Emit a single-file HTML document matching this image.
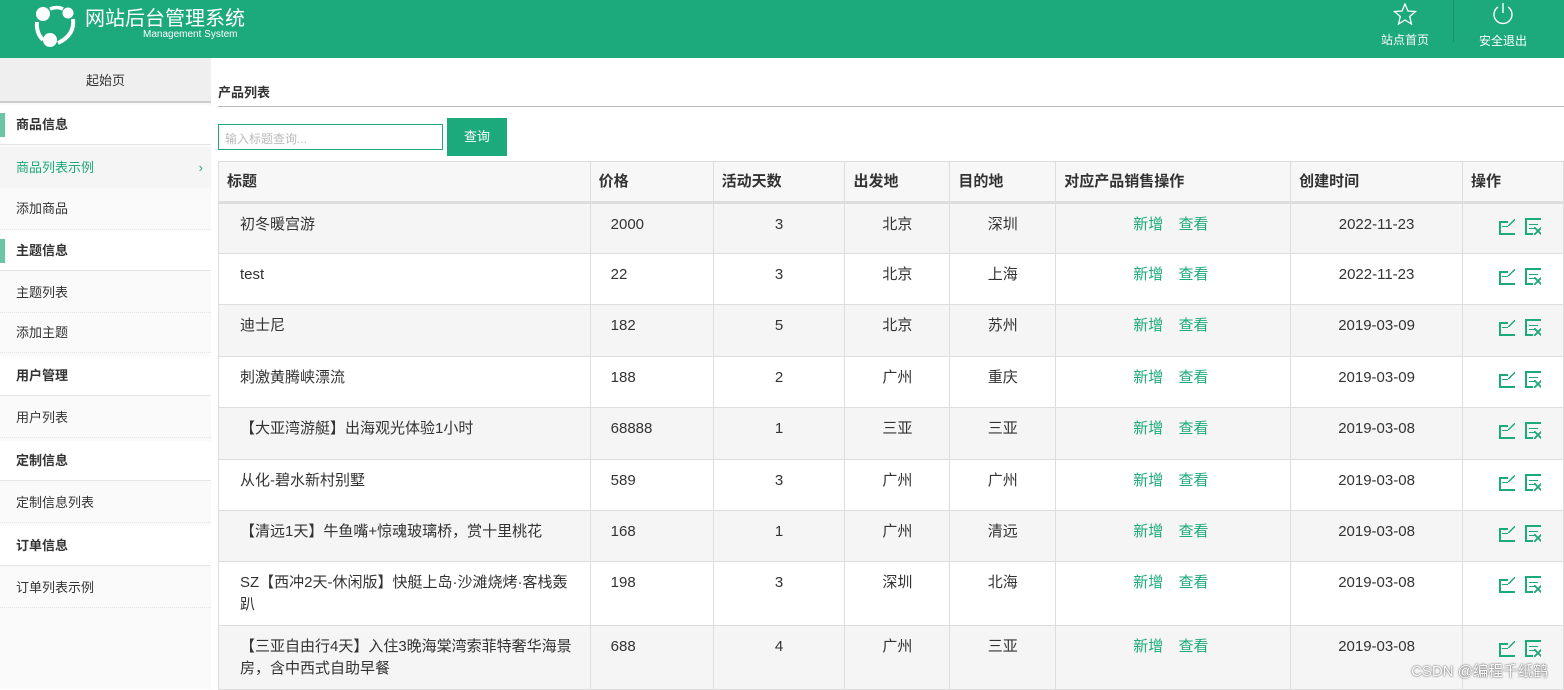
<!DOCTYPE html>
<html><head><meta charset="utf-8"><style>
*{margin:0;padding:0;box-sizing:border-box}
body{width:1564px;height:689px;overflow:hidden;background:#fff;font-family:"Liberation Sans","Noto Sans CJK SC",sans-serif;color:#333;position:relative}
.hd{position:absolute;left:0;top:0;width:1564px;height:58px;background:#1ca97b}
.t1{position:absolute;left:85px;top:6px;color:#fff;font-size:20px;line-height:26px}
.t2{position:absolute;left:143px;top:29px;color:#fff;font-size:10px;line-height:12px}
.nav{position:absolute;top:0;height:58px;color:#fff;font-size:12px;text-align:center;line-height:16px}
.sb{position:absolute;left:0;top:58px;width:211px;height:631px;background:#fafafa}
.sb div{position:absolute;left:0;width:211px;font-size:13px}
table{border-collapse:collapse;position:absolute;left:218px;top:161px;font-size:15px;color:#333}
td,th{border:1px solid #ddd;vertical-align:top;text-align:left;line-height:22px}
th{height:41px;background:#f7f7f7;font-weight:bold;padding:9px 8px 0;border-bottom:3px solid #ddd}
td{padding:10px 8px 0}
tr.g td{background:#f5f5f5}
.gr{color:#1ca97b;margin-right:11px}
</style></head><body>
<div class="hd">
<svg style="position:absolute;left:32px;top:3px" width="46" height="46" viewBox="0 0 46 46"><circle cx="11" cy="11" r="7" fill="#fff"/><circle cx="36" cy="10" r="5.5" fill="#fff"/><circle cx="18" cy="37" r="7" fill="#fff"/><path d="M5 19 Q4 30 11 37" stroke="#fff" stroke-width="4" fill="none"/><path d="M18 6 Q25 3 31 6" stroke="#fff" stroke-width="3.5" fill="none"/><path d="M41 16 Q43 32 26 40" stroke="#fff" stroke-width="4" fill="none"/></svg>
<div class="t1">网站后台管理系统</div><div class="t2">Management System</div>
<div class="nav" style="left:1360px;width:90px"><svg style="margin-top:3px" width="24" height="22" viewBox="0 0 24 22"><path d="M12 1l3 7 7.5.5-5.8 5 1.8 7.5L12 17l-6.5 4 1.8-7.5L1.5 8.5 9 8z" fill="none" stroke="#fff" stroke-width="1.3"/></svg><div style="margin-top:3px">站点首页</div></div>
<div style="position:absolute;left:1453px;top:0;width:1px;height:42px;background:#17946b"></div>
<div class="nav" style="left:1470px;width:66px"><svg style="margin-top:2px" width="24" height="24" viewBox="0 0 24 24"><path d="M7 5a9 9 0 1 0 10 0" fill="none" stroke="#fff" stroke-width="1.4"/><path d="M12 1v10" stroke="#fff" stroke-width="1.4"/></svg><div style="margin-top:3px">安全退出</div></div>
</div>
<div class="sb">
<div style="top:0;height:45px;background:#efefef;border-bottom:2px solid #ccc;text-align:center;line-height:45px">起始页</div>
<div style="top:47px;height:40px;line-height:40px;padding-left:16px;font-weight:bold;border-bottom:1px solid #e5e5e5;background:#fff"><span style="position:absolute;left:0;top:8px;width:5px;height:24px;background:#6cc6a6"></span>商品信息</div>
<div style="top:89px;height:41px;line-height:41px;padding-left:16px;color:#1ca97b;background:#f5f5f5">商品列表示例<span style="position:absolute;right:8px">›</span></div>
<div style="top:130px;height:42px;line-height:42px;padding-left:16px;border-bottom:1px dotted #e5e5e5">添加商品</div>
<div style="top:173px;height:40px;line-height:40px;padding-left:16px;font-weight:bold;border-bottom:1px solid #e5e5e5;background:#fff"><span style="position:absolute;left:0;top:8px;width:5px;height:24px;background:#6cc6a6"></span>主题信息</div>
<div style="top:215px;height:40px;line-height:40px;padding-left:16px;border-bottom:1px dotted #e5e5e5">主题列表</div>
<div style="top:255px;height:40px;line-height:40px;padding-left:16px;border-bottom:1px dotted #e5e5e5">添加主题</div>
<div style="top:298px;height:40px;line-height:40px;padding-left:16px;font-weight:bold;border-bottom:1px solid #e5e5e5;background:#fff">用户管理</div>
<div style="top:340px;height:40px;line-height:40px;padding-left:16px;border-bottom:1px dotted #e5e5e5">用户列表</div>
<div style="top:383px;height:40px;line-height:40px;padding-left:16px;font-weight:bold;border-bottom:1px solid #e5e5e5;background:#fff">定制信息</div>
<div style="top:425px;height:40px;line-height:40px;padding-left:16px;border-bottom:1px dotted #e5e5e5">定制信息列表</div>
<div style="top:468px;height:40px;line-height:40px;padding-left:16px;font-weight:bold;border-bottom:1px solid #e5e5e5;background:#fff">订单信息</div>
<div style="top:510px;height:40px;line-height:40px;padding-left:16px;border-bottom:1px dotted #e5e5e5">订单列表示例</div>
</div>
<div style="position:absolute;left:218px;top:82px;font-size:13px;font-weight:bold">产品列表</div>
<div style="position:absolute;left:218px;top:106px;width:1346px;height:1px;background:#bbb"></div>
<div style="position:absolute;left:218px;top:124px;width:225px;height:26px;border:1px solid #1ca97b;font-size:12px;color:#bbb;padding:5px 6px">输入标题查询...</div>
<div style="position:absolute;left:447px;top:118px;width:60px;height:38px;background:#1ca97b;color:#fff;font-size:13px;text-align:center;line-height:38px">查询</div>
<table>
<tr><th style="width:372px">标题</th><th style="width:123px">价格</th><th style="width:132px">活动天数</th><th style="width:105px">出发地</th><th style="width:106px">目的地</th><th style="width:235px">对应产品销售操作</th><th style="width:172px">创建时间</th><th style="width:101px">操作</th></tr>
<tr class="g" style="height:51px"><td style="padding-left:21px">初冬暖宫游</td><td style="padding-left:20px">2000</td><td style="text-align:center">3</td><td style="text-align:center">北京</td><td style="text-align:center">深圳</td><td style="padding-left:77px"><span class="gr">新增</span> <span class="gr">查看</span></td><td style="text-align:center">2022-11-23</td><td class="ic"></td></tr>
<tr style="height:51px"><td style="padding-left:21px">test</td><td style="padding-left:20px">22</td><td style="text-align:center">3</td><td style="text-align:center">北京</td><td style="text-align:center">上海</td><td style="padding-left:77px"><span class="gr">新增</span> <span class="gr">查看</span></td><td style="text-align:center">2022-11-23</td><td class="ic"></td></tr>
<tr class="g" style="height:52px"><td style="padding-left:21px">迪士尼</td><td style="padding-left:20px">182</td><td style="text-align:center">5</td><td style="text-align:center">北京</td><td style="text-align:center">苏州</td><td style="padding-left:77px"><span class="gr">新增</span> <span class="gr">查看</span></td><td style="text-align:center">2019-03-09</td><td class="ic"></td></tr>
<tr style="height:51px"><td style="padding-left:21px">刺激黄腾峡漂流</td><td style="padding-left:20px">188</td><td style="text-align:center">2</td><td style="text-align:center">广州</td><td style="text-align:center">重庆</td><td style="padding-left:77px"><span class="gr">新增</span> <span class="gr">查看</span></td><td style="text-align:center">2019-03-09</td><td class="ic"></td></tr>
<tr class="g" style="height:52px"><td style="padding-left:21px">【大亚湾游艇】出海观光体验1小时</td><td style="padding-left:20px">68888</td><td style="text-align:center">1</td><td style="text-align:center">三亚</td><td style="text-align:center">三亚</td><td style="padding-left:77px"><span class="gr">新增</span> <span class="gr">查看</span></td><td style="text-align:center">2019-03-08</td><td class="ic"></td></tr>
<tr style="height:51px"><td style="padding-left:21px">从化-碧水新村别墅</td><td style="padding-left:20px">589</td><td style="text-align:center">3</td><td style="text-align:center">广州</td><td style="text-align:center">广州</td><td style="padding-left:77px"><span class="gr">新增</span> <span class="gr">查看</span></td><td style="text-align:center">2019-03-08</td><td class="ic"></td></tr>
<tr class="g" style="height:51px"><td style="padding-left:21px">【清远1天】牛鱼嘴+惊魂玻璃桥，赏十里桃花</td><td style="padding-left:20px">168</td><td style="text-align:center">1</td><td style="text-align:center">广州</td><td style="text-align:center">清远</td><td style="padding-left:77px"><span class="gr">新增</span> <span class="gr">查看</span></td><td style="text-align:center">2019-03-08</td><td class="ic"></td></tr>
<tr style="height:64px"><td style="padding-left:21px">SZ【西冲2天-休闲版】快艇上岛·沙滩烧烤·客栈轰趴</td><td style="padding-left:20px">198</td><td style="text-align:center">3</td><td style="text-align:center">深圳</td><td style="text-align:center">北海</td><td style="padding-left:77px"><span class="gr">新增</span> <span class="gr">查看</span></td><td style="text-align:center">2019-03-08</td><td class="ic"></td></tr>
<tr class="g" style="height:64px"><td style="padding-left:21px">【三亚自由行4天】入住3晚海棠湾索菲特奢华海景房，含中西式自助早餐</td><td style="padding-left:20px">688</td><td style="text-align:center">4</td><td style="text-align:center">广州</td><td style="text-align:center">三亚</td><td style="padding-left:77px"><span class="gr">新增</span> <span class="gr">查看</span></td><td style="text-align:center">2019-03-08</td><td class="ic"></td></tr>
</table>
<style>
td.ic{padding:14px 0 0 36px}
td.ic::before{content:"";display:inline-block;width:16px;height:16px;background:
linear-gradient(#1ca97b,#1ca97b) 0 2px/2px 14px no-repeat,
linear-gradient(#1ca97b,#1ca97b) 0 2px/9px 2px no-repeat,
linear-gradient(#1ca97b,#1ca97b) 0 14px/16px 2px no-repeat,
linear-gradient(#1ca97b,#1ca97b) 3px 7px/6px 1px no-repeat,
linear-gradient(135deg,transparent 45%,#1ca97b 45%,#1ca97b 60%,transparent 60%) 9px 0/7px 7px no-repeat;margin-right:10px}
td.ic::after{content:"";display:inline-block;width:16px;height:17px;border:2px solid #1ca97b;border-right:none;border-bottom:none;box-sizing:border-box;background:
linear-gradient(#1ca97b,#1ca97b) 2px 4px/9px 1px no-repeat,
linear-gradient(#1ca97b,#1ca97b) 2px 8px/6px 1px no-repeat,
linear-gradient(#1ca97b,#1ca97b) 0 13px/6px 2px no-repeat,
linear-gradient(45deg,transparent 42%,#1ca97b 42%,#1ca97b 58%,transparent 58%) 7px 7px/8px 8px no-repeat,
linear-gradient(-45deg,transparent 42%,#1ca97b 42%,#1ca97b 58%,transparent 58%) 7px 7px/8px 8px no-repeat}
</style>
<div style="position:absolute;right:16px;top:660px;color:#fff;font-size:15px;text-shadow:0 0 1px #555,0 0 2px #777">CSDN @编程千纸鹤</div>
</body></html>
